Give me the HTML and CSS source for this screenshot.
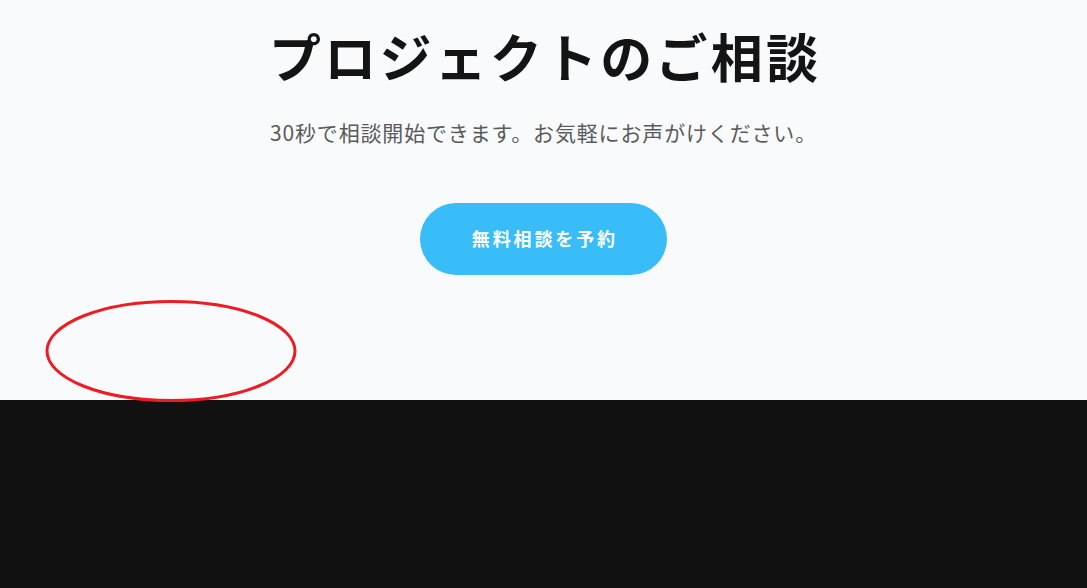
FILE: index.html
```html
<!DOCTYPE html>
<html lang="ja">
<head>
<meta charset="utf-8">
<link rel="stylesheet" href="styles.css">
</head>
<body>
<main class="page">
  <section class="cta">
    <h1 class="cta-title">プロジェクトのご相談</h1>
    <p class="cta-sub">30秒で相談開始できます。お気軽にお声がけください。</p>
    <a class="cta-button" href="#">無料相談を予約</a>
  </section>
  <footer class="footer"></footer>
  <svg class="mark" width="254" height="106" viewBox="0 0 254 106" aria-hidden="true">
    <ellipse cx="126" cy="52" rx="124" ry="49.5" fill="none" stroke="#ed1c24" stroke-width="3"/>
  </svg>
</main>
</body>
</html>
```
FILE: styles.css
```css
* { box-sizing: border-box; }
html, body { margin: 0; padding: 0; }
body {
  font-family: "Noto Sans CJK JP", "Noto Sans", sans-serif;
  background: #111111;
}
.page {
  position: relative;
  width: 100%;
  height: 588px;
  overflow: hidden;
  display: flex;
  flex-direction: column;
}
.cta {
  height: 400px;
  background: #f8fafc;
  display: flex;
  flex-direction: column;
  align-items: center;
  padding-top: 25px;
}
.cta-title {
  margin: 0;
  font-size: 52px;
  line-height: 62px;
  font-weight: 700;
  letter-spacing: 3.2px;
  color: #141414;
  padding-left: 3.2px;
}
.cta-sub {
  margin: 29px 0 0;
  font-size: 21px;
  line-height: 32px;
  color: #5a5a5a;
  letter-spacing: 0.04em;
}
.cta-button {
  margin-top: 55px;
  width: 247px;
  height: 72px;
  border-radius: 36px;
  background: #38bdf8;
  color: #ffffff;
  text-decoration: none;
  font-size: 18px;
  font-weight: 700;
  letter-spacing: 0.16em;
  display: flex;
  align-items: center;
  justify-content: center;
  padding-left: 0.16em;
  padding-bottom: 3px;
}
.footer {
  flex: 1;
  background: #111111;
}
.mark {
  position: absolute;
  left: 45px;
  top: 299px;
}
```
